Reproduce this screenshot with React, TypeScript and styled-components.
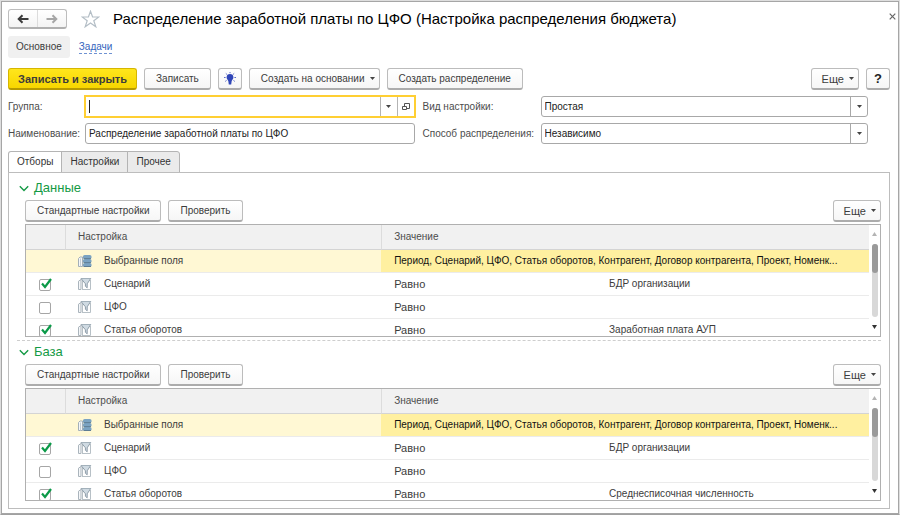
import React from "react";
import styled, { createGlobalStyle, css } from "styled-components";

const GlobalStyle = createGlobalStyle`
  *, *::before, *::after { box-sizing: border-box; }
  body {
    margin: 0;
    background: #fff;
    color: #3c3c3c;
    font: 10px/16px "Liberation Sans", Arial, sans-serif;
  }
  button, input, select { font: inherit; color: inherit; margin: 0; }
`;

const Window = styled.main`
  min-height: 100vh;
  padding: 6px 9px 5px 7px;
  border: 1px solid #dedede;
  border-bottom-color: #a0a0a0;
  box-shadow: inset 0 0 0 1px #a6a6a6;
  display: flex;
  flex-direction: column;
`;

const TitleBar = styled.header`
  display: flex;
  align-items: center;
  height: 24px;
`;

const NavGroup = styled.div`
  display: flex;
  height: 20px;
  width: 59px;
  border: 1px solid #bdbdbd;
  border-bottom: 2px solid #b0b0b0;
  border-radius: 3px;
  background: linear-gradient(#fff, #f4f4f4);
`;

const NavButton = styled.button`
  flex: 1;
  display: flex;
  align-items: center;
  justify-content: center;
  padding: 0;
  border: 0;
  background: none;
  & + & { border-left: 1px solid #dcdcdc; }
`;

const StarButton = styled.button`
  display: flex;
  margin: 0 13px 0 14px;
  padding: 0;
  border: 0;
  background: none;
`;

const Title = styled.h1`
  flex: 1;
  margin: 0;
  font-size: 15px;
  line-height: 20px;
  font-weight: 400;
  color: #000;
  white-space: nowrap;
`;

const CloseButton = styled.button`
  align-self: flex-start;
  display: flex;
  padding: 6px 0;
  margin-right: -6px;
  border: 0;
  background: none;
`;

const Sections = styled.nav`
  display: flex;
  align-items: center;
  gap: 9px;
  margin-top: 5px;
  height: 22px;
`;

const CurrentSection = styled.span`
  padding: 3px 8px;
  border-radius: 3px;
  background: #f0f0f0;
`;

const SectionLink = styled.a`
  color: #3565bd;
  line-height: 12px;
  text-decoration: none;
  border-bottom: 1px dashed #6f92d2;
`;

const Button = styled.button<{ $primary?: boolean; $square?: boolean; $menu?: boolean }>`
  display: flex;
  align-items: center;
  justify-content: center;
  gap: 5px;
  height: 22px;
  padding: 0 11px;
  white-space: nowrap;
  border: 1px solid #bcbcbc;
  border-bottom: 2px solid #acacac;
  border-radius: 3px;
  background: linear-gradient(#fff, #f6f6f6);
  ${(p) => p.$menu && css`padding-right: 4px;`}
  ${(p) => p.$square && css`width: 24px; padding: 0;`}
  ${(p) => p.$primary && css`
    padding: 0 9px;
    font-size: 11px;
    font-weight: 700;
    border-color: #d6b600;
    border-bottom-color: #b79a00;
    background: linear-gradient(#ffe61c, #f7d600);
  `}
`;

const MoreButton = styled(Button)`
  padding: 0 4px 0 10px;
  font-size: 11px;
`;

const Toolbar = styled.div<{ $main?: boolean }>`
  display: flex;
  gap: 7px;
  margin-top: ${(p) => (p.$main ? 10 : 2)}px;
`;

const Spacer = styled.span`
  flex: 1;
`;

const HelpMark = styled.span`
  font-size: 13px;
  font-weight: 700;
  color: #222;
`;

const Form = styled.form`
  display: grid;
  grid-template-columns: 77px minmax(0, 329fr) 126px minmax(0, 327fr);
  row-gap: 6px;
  align-items: center;
  margin: 6px 22px 0 0;
`;

const Label = styled.label<{ $second?: boolean }>`
  white-space: nowrap;
  color: #4c4c4c;
  padding-left: ${(p) => (p.$second ? 8 : 0)}px;
`;

const Field = styled.div<{ $active?: boolean }>`
  display: flex;
  align-items: stretch;
  height: 21px;
  border: 1px solid #a8a8a8;
  border-radius: 3px;
  background: #fff;
  ${(p) => p.$active && css`
    border-color: #ffcf33;
    border-radius: 0;
    outline: 1px solid #ffcf33;
  `}
`;

const TextInput = styled.input`
  flex: 1;
  min-width: 0;
  padding: 0 3px;
  border: 0;
  outline: 0;
  background: none;
  color: #222;
`;

const Caret = styled.span`
  width: 1px;
  margin: 3px 0 3px 3px;
  background: #222;
`;

const FieldButton = styled.button`
  width: 17px;
  display: flex;
  align-items: center;
  justify-content: center;
  padding: 0;
  border: 0;
  border-left: 1px solid #b4b4b4;
  background: none;
`;

const SelectField = styled(Field)`
  display: grid;
  grid-template-columns: minmax(0, 1fr) 17px;
`;

const Select = styled.select`
  grid-area: 1 / 1 / 2 / 3;
  appearance: none;
  padding: 0 20px 0 3px;
  border: 0;
  outline: 0;
  background: none;
  color: #222;
`;

const SelectArrow = styled.span`
  grid-area: 1 / 2;
  display: flex;
  align-items: center;
  justify-content: center;
  border-left: 1px solid #a8a8a8;
  pointer-events: none;
`;

const Tabs = styled.div`
  display: flex;
  margin-top: 7px;
`;

const Tab = styled.button<{ $on?: boolean }>`
  height: 22px;
  margin: 0 0 -1px -1px;
  padding: 0 8px;
  border: 1px solid #b4b4b4;
  background: #ebebeb;
  color: #333;
  &:first-child { margin-left: 0; border-top-left-radius: 3px; }
  &:last-child { border-top-right-radius: 3px; }
  ${(p) => p.$on && css`
    border-bottom-color: #fff;
    background: #fff;
  `}
`;

const Panel = styled.section`
  flex: 1;
  padding: 5px 8px 7px;
  border: 1px solid #bdbdbd;
`;

const Group = styled.section`
  padding-left: 8px;
`;

const Divider = styled.hr`
  margin: 3px 0 1px;
  border: 0;
  border-top: 1px dashed #cecece;
`;

const GroupTitle = styled.h2`
  margin: 0 0 0 -6px;
  font-size: 13px;
  line-height: 20px;
  font-weight: 400;
  color: #149a45;
`;

const GroupToggle = styled.button`
  display: flex;
  align-items: center;
  gap: 5px;
  padding: 0;
  border: 0;
  background: none;
`;

const ListBox = styled.div`
  display: flex;
  height: 113px;
  margin-top: 2px;
  border: 1px solid #b0b0b0;
`;

const ListView = styled.div`
  flex: 1;
  min-width: 0;
  overflow: hidden;
`;

const Table = styled.table`
  width: 100%;
  table-layout: fixed;
  border-collapse: separate;
  border-spacing: 0;
  text-align: left;
`;

const HeadCell = styled.th`
  height: 25px;
  padding: 0 12px;
  font-weight: 400;
  background: #f1f1f1;
  border-bottom: 1px solid #d4d4d4;
  color: #4c4c4c;
  & + & { border-left: 1px solid #dcdcdc; }
`;

const Row = styled.tr<{ $selected?: boolean }>`
  background: ${(p) => (p.$selected ? "#fff8d4" : "#fff")};
`;

const Cell = styled.td<{ $current?: boolean; $operator?: boolean }>`
  height: 23px;
  padding: 0 0 0 13px;
  border-bottom: 1px solid #ebebeb;
  white-space: nowrap;
  overflow: hidden;
  color: #3c3c3c;
  ${(p) => p.$operator && css`font-size: 11px;`}
  ${(p) => p.$current && css`
    background: #fff0a0;
    color: #111;
  `}
`;

const Setting = styled.span`
  display: flex;
  align-items: center;
  gap: 12px;
`;

const CheckWrap = styled.span`
  display: grid;
  width: 15px;
`;

const CheckBox = styled.input`
  grid-area: 1 / 1;
  appearance: none;
  align-self: end;
  width: 12px;
  height: 12px;
  border: 1px solid #a6a6a6;
  border-radius: 2px;
  background: #fff;
`;

const CheckMark = styled.svg`
  grid-area: 1 / 1;
  pointer-events: none;
`;

const ScrollBar = styled.div`
  width: 11px;
  display: flex;
  flex-direction: column;
  align-items: center;
  padding: 7px 0;
  gap: 8px;
`;

const ScrollTrack = styled.div`
  flex: 1;
  width: 6px;
  border-radius: 3px;
  background: #d8d8d8;
`;

const ScrollThumb = styled.div`
  height: 29px;
  border-radius: 3px;
  background: #9a9a9a;
`;

const Down = () => (
  <svg width="5" height="3" viewBox="0 0 5 3" aria-hidden="true">
    <path d="M0 0h5L2.5 3z" fill="#444" />
  </svg>
);

const Up = () => (
  <svg width="5" height="4" viewBox="0 0 5 4" aria-hidden="true">
    <path d="M0 4h5L2.5 0z" fill="#b4b4b4" />
  </svg>
);

const ScrollDown = () => (
  <svg width="5" height="4" viewBox="0 0 5 4" aria-hidden="true">
    <path d="M0 0h5L2.5 4z" fill="#333" />
  </svg>
);

const Arrow = ({ right }: { right?: boolean }) => (
  <svg width="12" height="10" viewBox="0 0 12 10" fill="none" stroke={right ? "#a6a6a6" : "#3c3c3c"} strokeWidth="2" aria-hidden="true">
    {right ? <path d="M0.5 5H10.5M6.5 1.2L10.3 5L6.5 8.8" /> : <path d="M11.5 5H1.5M5.5 1.2L1.7 5L5.5 8.8" />}
  </svg>
);

const Star = () => (
  <svg width="19" height="18" viewBox="0 0 19 18" fill="#fff" stroke="#b4bec6" strokeWidth="1.2" aria-hidden="true">
    <path d="M9.5 1.2L11.6 7H17.8L12.8 10.7L14.8 16.8L9.5 13.1L4.2 16.8L6.2 10.7L1.2 7H7.4Z" />
  </svg>
);

const Cross = () => (
  <svg width="7" height="7" viewBox="0 0 7 7" stroke="#666" strokeWidth="1.2" aria-hidden="true">
    <path d="M0.7 0.7L6.3 6.3M6.3 0.7L0.7 6.3" />
  </svg>
);

const Bulb = () => (
  <svg width="12" height="13" viewBox="0 0 12 13" aria-hidden="true">
    <path d="M6 2A3.4 3.4 0 0 0 2.6 5.4C2.6 7.3 4.2 7.8 4.4 9.5L4.8 12.5H7.2L7.6 9.5C7.8 7.8 9.4 7.3 9.4 5.4A3.4 3.4 0 0 0 6 2Z" fill="#3046b8" />
    <path d="M6 0V1.2M1.8 1.4L2.9 2.4M10.2 1.4L9.1 2.4M0 5.5H1.6M12 5.5H10.4M1.2 9.4L2.5 8.5M10.8 9.4L9.5 8.5" stroke="#5d6fc8" strokeWidth="1" />
  </svg>
);

const OpenIcon = () => (
  <svg width="8" height="8" viewBox="0 0 8 8" fill="#fff" stroke="#555" aria-hidden="true">
    <path d="M2.5 0.5h5v5h-5z" />
    <path d="M0.5 3.5h4v3h-4z" />
  </svg>
);

const Chevron = () => (
  <svg width="10" height="7" viewBox="0 0 10 7" fill="none" stroke="#149a45" strokeWidth="1.4" aria-hidden="true">
    <path d="M0.8 1.2L5 5.4L9.2 1.2" />
  </svg>
);

const FieldsIcon = () => (
  <svg width="14" height="14" viewBox="0 0 14 14" aria-hidden="true">
    <path d="M0.5 12.5V4.5L2 3H4.5V12.5Z" fill="#f4f6f8" stroke="#a3afb8" />
    <path d="M2.5 4.5V12.5" stroke="#c3ccd2" />
    <g fill="#7ba3c2">
      <rect x="5" y="1" width="8.5" height="3.8" rx="1.6" />
      <rect x="5" y="5" width="8.5" height="3.8" rx="1.6" />
      <rect x="5" y="9" width="8.5" height="3.8" rx="1.6" />
    </g>
    <path d="M5.6 4.6H13M5.6 8.6H13M5.6 12.5H13" stroke="#56758e" strokeWidth="0.9" />
  </svg>
);

const FilterIcon = () => (
  <svg width="14" height="14" viewBox="0 0 14 14" fill="none" aria-hidden="true">
    <path d="M0.5 12.5V4.2L3 2.5V12.5Z" fill="#f4f6f8" stroke="#aab4bc" />
    <path d="M4.5 12.5V3.5M12.5 3V12.5H4" stroke="#b7c0c6" />
    <path d="M3 1.5H12.7L9.2 6.8V10.8L7.4 9.3V6.8Z" fill="#cfdae2" stroke="#8594a0" strokeWidth="0.9" />
    <path d="M3.2 1.5H12.6" stroke="#a3b1bb" />
  </svg>
);

type Item = { name: string; checked: boolean; value: string };

function SettingsList({ id, items }: { id: string; items: Item[] }) {
  return (
    <ListBox>
      <ListView>
        <Table>
          <colgroup>
            <col style={{ width: 39 }} />
            <col style={{ width: "37.5%" }} />
            <col style={{ width: "25.5%" }} />
            <col />
          </colgroup>
          <thead>
            <tr>
              <HeadCell aria-label="Использование" />
              <HeadCell>Настройка</HeadCell>
              <HeadCell colSpan={2}>Значение</HeadCell>
            </tr>
          </thead>
          <tbody>
            <Row $selected>
              <Cell />
              <Cell>
                <Setting><FieldsIcon />Выбранные поля</Setting>
              </Cell>
              <Cell $current colSpan={2}>
                Период, Сценарий, ЦФО, Статья оборотов, Контрагент, Договор контрагента, Проект, Номенк...
              </Cell>
            </Row>
            {items.map((item, i) => (
              <Row key={item.name}>
                <Cell>
                  <CheckWrap>
                    <CheckBox type="checkbox" id={`${id}-${i}`} defaultChecked={item.checked} />
                    <CheckMark width="15" height="14" viewBox="0 0 15 14" fill="none">
                      {item.checked && <path d="M3 6.5L6 10L12 2" stroke="#0a9a48" strokeWidth="2.2" />}
                    </CheckMark>
                  </CheckWrap>
                </Cell>
                <Cell>
                  <Setting as="label" htmlFor={`${id}-${i}`}><FilterIcon />{item.name}</Setting>
                </Cell>
                <Cell $operator>Равно</Cell>
                <Cell>{item.value}</Cell>
              </Row>
            ))}
          </tbody>
        </Table>
      </ListView>
      <ScrollBar>
        <Up />
        <ScrollTrack><ScrollThumb /></ScrollTrack>
        <ScrollDown />
      </ScrollBar>
    </ListBox>
  );
}

function SettingsGroup({ id, title, items }: { id: string; title: string; items: Item[] }) {
  return (
    <Group>
      <GroupTitle>
        <GroupToggle type="button" aria-expanded="true"><Chevron />{title}</GroupToggle>
      </GroupTitle>
      <Toolbar>
        <Button type="button">Стандартные настройки</Button>
        <Button type="button">Проверить</Button>
        <Spacer />
        <MoreButton type="button">Еще <Down /></MoreButton>
      </Toolbar>
      <SettingsList id={id} items={items} />
    </Group>
  );
}

const makeItems = (account: string): Item[] => [
  { name: "Сценарий", checked: true, value: "БДР организации" },
  { name: "ЦФО", checked: false, value: "" },
  { name: "Статья оборотов", checked: true, value: account },
];

export default function App() {
  return (
    <>
      <GlobalStyle />
      <Window>
        <TitleBar>
          <NavGroup>
            <NavButton type="button" aria-label="Назад"><Arrow /></NavButton>
            <NavButton type="button" aria-label="Вперед"><Arrow right /></NavButton>
          </NavGroup>
          <StarButton type="button" aria-label="Избранное"><Star /></StarButton>
          <Title>Распределение заработной платы по ЦФО (Настройка распределения бюджета)</Title>
          <CloseButton type="button" aria-label="Закрыть"><Cross /></CloseButton>
        </TitleBar>
        <Sections>
          <CurrentSection>Основное</CurrentSection>
          <SectionLink href="#tasks">Задачи</SectionLink>
        </Sections>
        <Toolbar $main>
          <Button type="button" $primary>Записать и закрыть</Button>
          <Button type="button">Записать</Button>
          <Button type="button" $square aria-label="Подсказка"><Bulb /></Button>
          <Button type="button" $menu>Создать на основании <Down /></Button>
          <Button type="button">Создать распределение</Button>
          <Spacer />
          <MoreButton type="button">Еще <Down /></MoreButton>
          <Button type="button" $square aria-label="Справка"><HelpMark>?</HelpMark></Button>
        </Toolbar>
        <Form>
          <Label htmlFor="group">Группа:</Label>
          <Field $active>
            <Caret />
            <TextInput id="group" />
            <FieldButton type="button" aria-label="Выбрать"><Down /></FieldButton>
            <FieldButton type="button" aria-label="Открыть"><OpenIcon /></FieldButton>
          </Field>
          <Label htmlFor="kind" $second>Вид настройки:</Label>
          <SelectField>
            <Select id="kind"><option>Простая</option></Select>
            <SelectArrow><Down /></SelectArrow>
          </SelectField>
          <Label htmlFor="name">Наименование:</Label>
          <Field>
            <TextInput id="name" defaultValue="Распределение заработной платы по ЦФО" />
          </Field>
          <Label htmlFor="method" $second>Способ распределения:</Label>
          <SelectField>
            <Select id="method"><option>Независимо</option></Select>
            <SelectArrow><Down /></SelectArrow>
          </SelectField>
        </Form>
        <Tabs role="tablist">
          <Tab type="button" role="tab" aria-selected="true" $on>Отборы</Tab>
          <Tab type="button" role="tab" aria-selected="false">Настройки</Tab>
          <Tab type="button" role="tab" aria-selected="false">Прочее</Tab>
        </Tabs>
        <Panel role="tabpanel">
          <SettingsGroup id="data" title="Данные" items={makeItems("Заработная плата АУП")} />
          <Divider />
          <SettingsGroup id="base" title="База" items={makeItems("Среднесписочная численность")} />
        </Panel>
      </Window>
    </>
  );
}
